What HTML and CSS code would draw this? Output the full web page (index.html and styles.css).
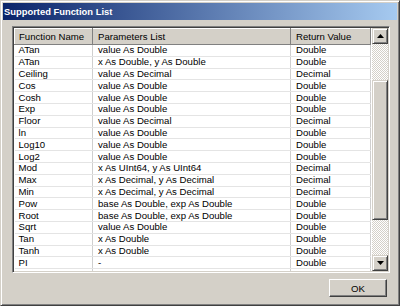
FILE: index.html
```html
<!DOCTYPE html>
<html>
<head>
<meta charset="utf-8">
<link rel="stylesheet" href="styles.css">
</head>
<body>
<div class="window">
  <div class="titlebar">Supported Function List</div>
  <div class="listbox">
    <div class="grid">
      <table>
        <colgroup><col class="c1"><col class="c2"><col class="c3"></colgroup>
        <thead>
          <tr><th>Function Name</th><th>Parameters List</th><th>Return Value</th></tr>
        </thead>
        <tbody>
          <tr><td>ATan</td><td>value As Double</td><td>Double</td></tr>
          <tr><td>ATan</td><td>x As Double, y As Double</td><td>Double</td></tr>
          <tr><td>Ceiling</td><td>value As Decimal</td><td>Decimal</td></tr>
          <tr><td>Cos</td><td>value As Double</td><td>Double</td></tr>
          <tr><td>Cosh</td><td>value As Double</td><td>Double</td></tr>
          <tr><td>Exp</td><td>value As Double</td><td>Double</td></tr>
          <tr><td>Floor</td><td>value As Decimal</td><td>Decimal</td></tr>
          <tr><td>ln</td><td>value As Double</td><td>Double</td></tr>
          <tr><td>Log10</td><td>value As Double</td><td>Double</td></tr>
          <tr><td>Log2</td><td>value As Double</td><td>Double</td></tr>
          <tr><td>Mod</td><td>x As UInt64, y As UInt64</td><td>Decimal</td></tr>
          <tr><td>Max</td><td>x As Decimal, y As Decimal</td><td>Decimal</td></tr>
          <tr><td>Min</td><td>x As Decimal, y As Decimal</td><td>Decimal</td></tr>
          <tr><td>Pow</td><td>base As Double, exp As Double</td><td>Double</td></tr>
          <tr><td>Root</td><td>base As Double, exp As Double</td><td>Double</td></tr>
          <tr><td>Sqrt</td><td>value As Double</td><td>Double</td></tr>
          <tr><td>Tan</td><td>x As Double</td><td>Double</td></tr>
          <tr><td>Tanh</td><td>x As Double</td><td>Double</td></tr>
          <tr><td>PI</td><td>-</td><td>Double</td></tr>
          <tr><td>E</td><td>-</td><td>Double</td></tr>
        </tbody>
      </table>
    </div>
    <div class="scrollbar">
      <div class="sbtn"><svg width="7" height="4" viewBox="0 0 7 4"><path d="M3.5 0 L7 4 L0 4 Z" fill="#000"/></svg></div>
      <div class="track t1"></div>
      <div class="thumb"></div>
      <div class="track t2"></div>
      <div class="sbtn"><svg width="7" height="4" viewBox="0 0 7 4"><path d="M0 0 L7 0 L3.5 4 Z" fill="#000"/></svg></div>
    </div>
  </div>
  <div class="footer">
    <div class="button">OK</div>
  </div>
</div>
</body>
</html>
```

FILE: styles.css
```css
html, body {
  margin: 0;
  padding: 0;
  background: #d4d0c8;
}
.window {
  width: 400px;
  height: 306px;
  box-sizing: border-box;
  background: #d4d0c8;
  border: 1px solid;
  border-color: #d4d0c8 #404040 #404040 #d4d0c8;
  box-shadow: inset 1px 1px #ffffff, inset -1px -1px #808080;
  padding: 2px;
  display: flex;
  flex-direction: column;
  font-family: "Liberation Sans", Arial, sans-serif;
  font-size: 9.6px;
  color: #000;
}
.titlebar {
  height: 17px;
  line-height: 17px;
  flex: none;
  padding-left: 1px;
  background: linear-gradient(to right, #0a246a, #a6caf0);
  color: #fff;
  font-weight: bold;
  font-size: 9.4px;
}
.listbox {
  margin: 6px 7px 0 9px;
  height: 247px;
  flex: none;
  box-sizing: border-box;
  border: 1px solid;
  border-color: #808080 #ffffff #ffffff #808080;
  box-shadow: inset 1px 1px #404040, inset -1px -1px #d4d0c8;
  padding: 1px;
  background: #fff;
  display: flex;
}
.grid {
  flex: 1;
  overflow: hidden;
}
table {
  border-collapse: collapse;
  table-layout: fixed;
  width: 356px;
}
col.c1 { width: 78px; }
col.c2 { width: 198px; }
col.c3 { width: 80px; }
th {
  height: 16px;
  box-sizing: border-box;
  padding: 0 0 0 4px;
  text-align: left;
  font-weight: normal;
  background: #d4d0c8;
  border: 1px solid;
  border-color: #ffffff #808080 #808080 #ffffff;
  white-space: nowrap;
}
td {
  height: 11.8px;
  box-sizing: border-box;
  padding: 0 0 0 4px;
  line-height: 10px;
  border-bottom: 1px solid #e4e4e4;
  border-right: 1px solid #cfcfcf;
  white-space: nowrap;
  overflow: hidden;
}
td:nth-child(2), th:nth-child(2) { padding-left: 5px; }
td:nth-child(3), th:nth-child(3) { padding-left: 5px; }
.scrollbar {
  width: 16px;
  flex: none;
  display: flex;
  flex-direction: column;
}
.sbtn {
  height: 16px;
  flex: none;
  box-sizing: border-box;
  background: #d4d0c8;
  border: 1px solid;
  border-color: #d4d0c8 #404040 #404040 #d4d0c8;
  box-shadow: inset 1px 1px #ffffff, inset -1px -1px #808080;
  display: flex;
  align-items: center;
  justify-content: center;
}
.track {
  background-color: #eeede9;
  background-image: repeating-conic-gradient(#ffffff 0 25%, #d4d0c8 0 50%);
  background-size: 2px 2px;
}
.t1 { height: 36px; flex: none; }
.t2 { flex: 1; }
.thumb {
  height: 140px;
  flex: none;
  box-sizing: border-box;
  background: #d4d0c8;
  border: 1px solid;
  border-color: #d4d0c8 #404040 #404040 #d4d0c8;
  box-shadow: inset 1px 1px #ffffff, inset -1px -1px #808080;
}
.footer {
  display: flex;
  justify-content: flex-end;
  padding: 6px 10px 0 0;
}
.button {
  width: 58px;
  height: 18px;
  box-sizing: border-box;
  background: #d4d0c8;
  border: 1px solid;
  border-color: #ffffff #404040 #404040 #ffffff;
  box-shadow: inset -1px -1px #808080;
  display: flex;
  align-items: center;
  justify-content: center;
}
```
